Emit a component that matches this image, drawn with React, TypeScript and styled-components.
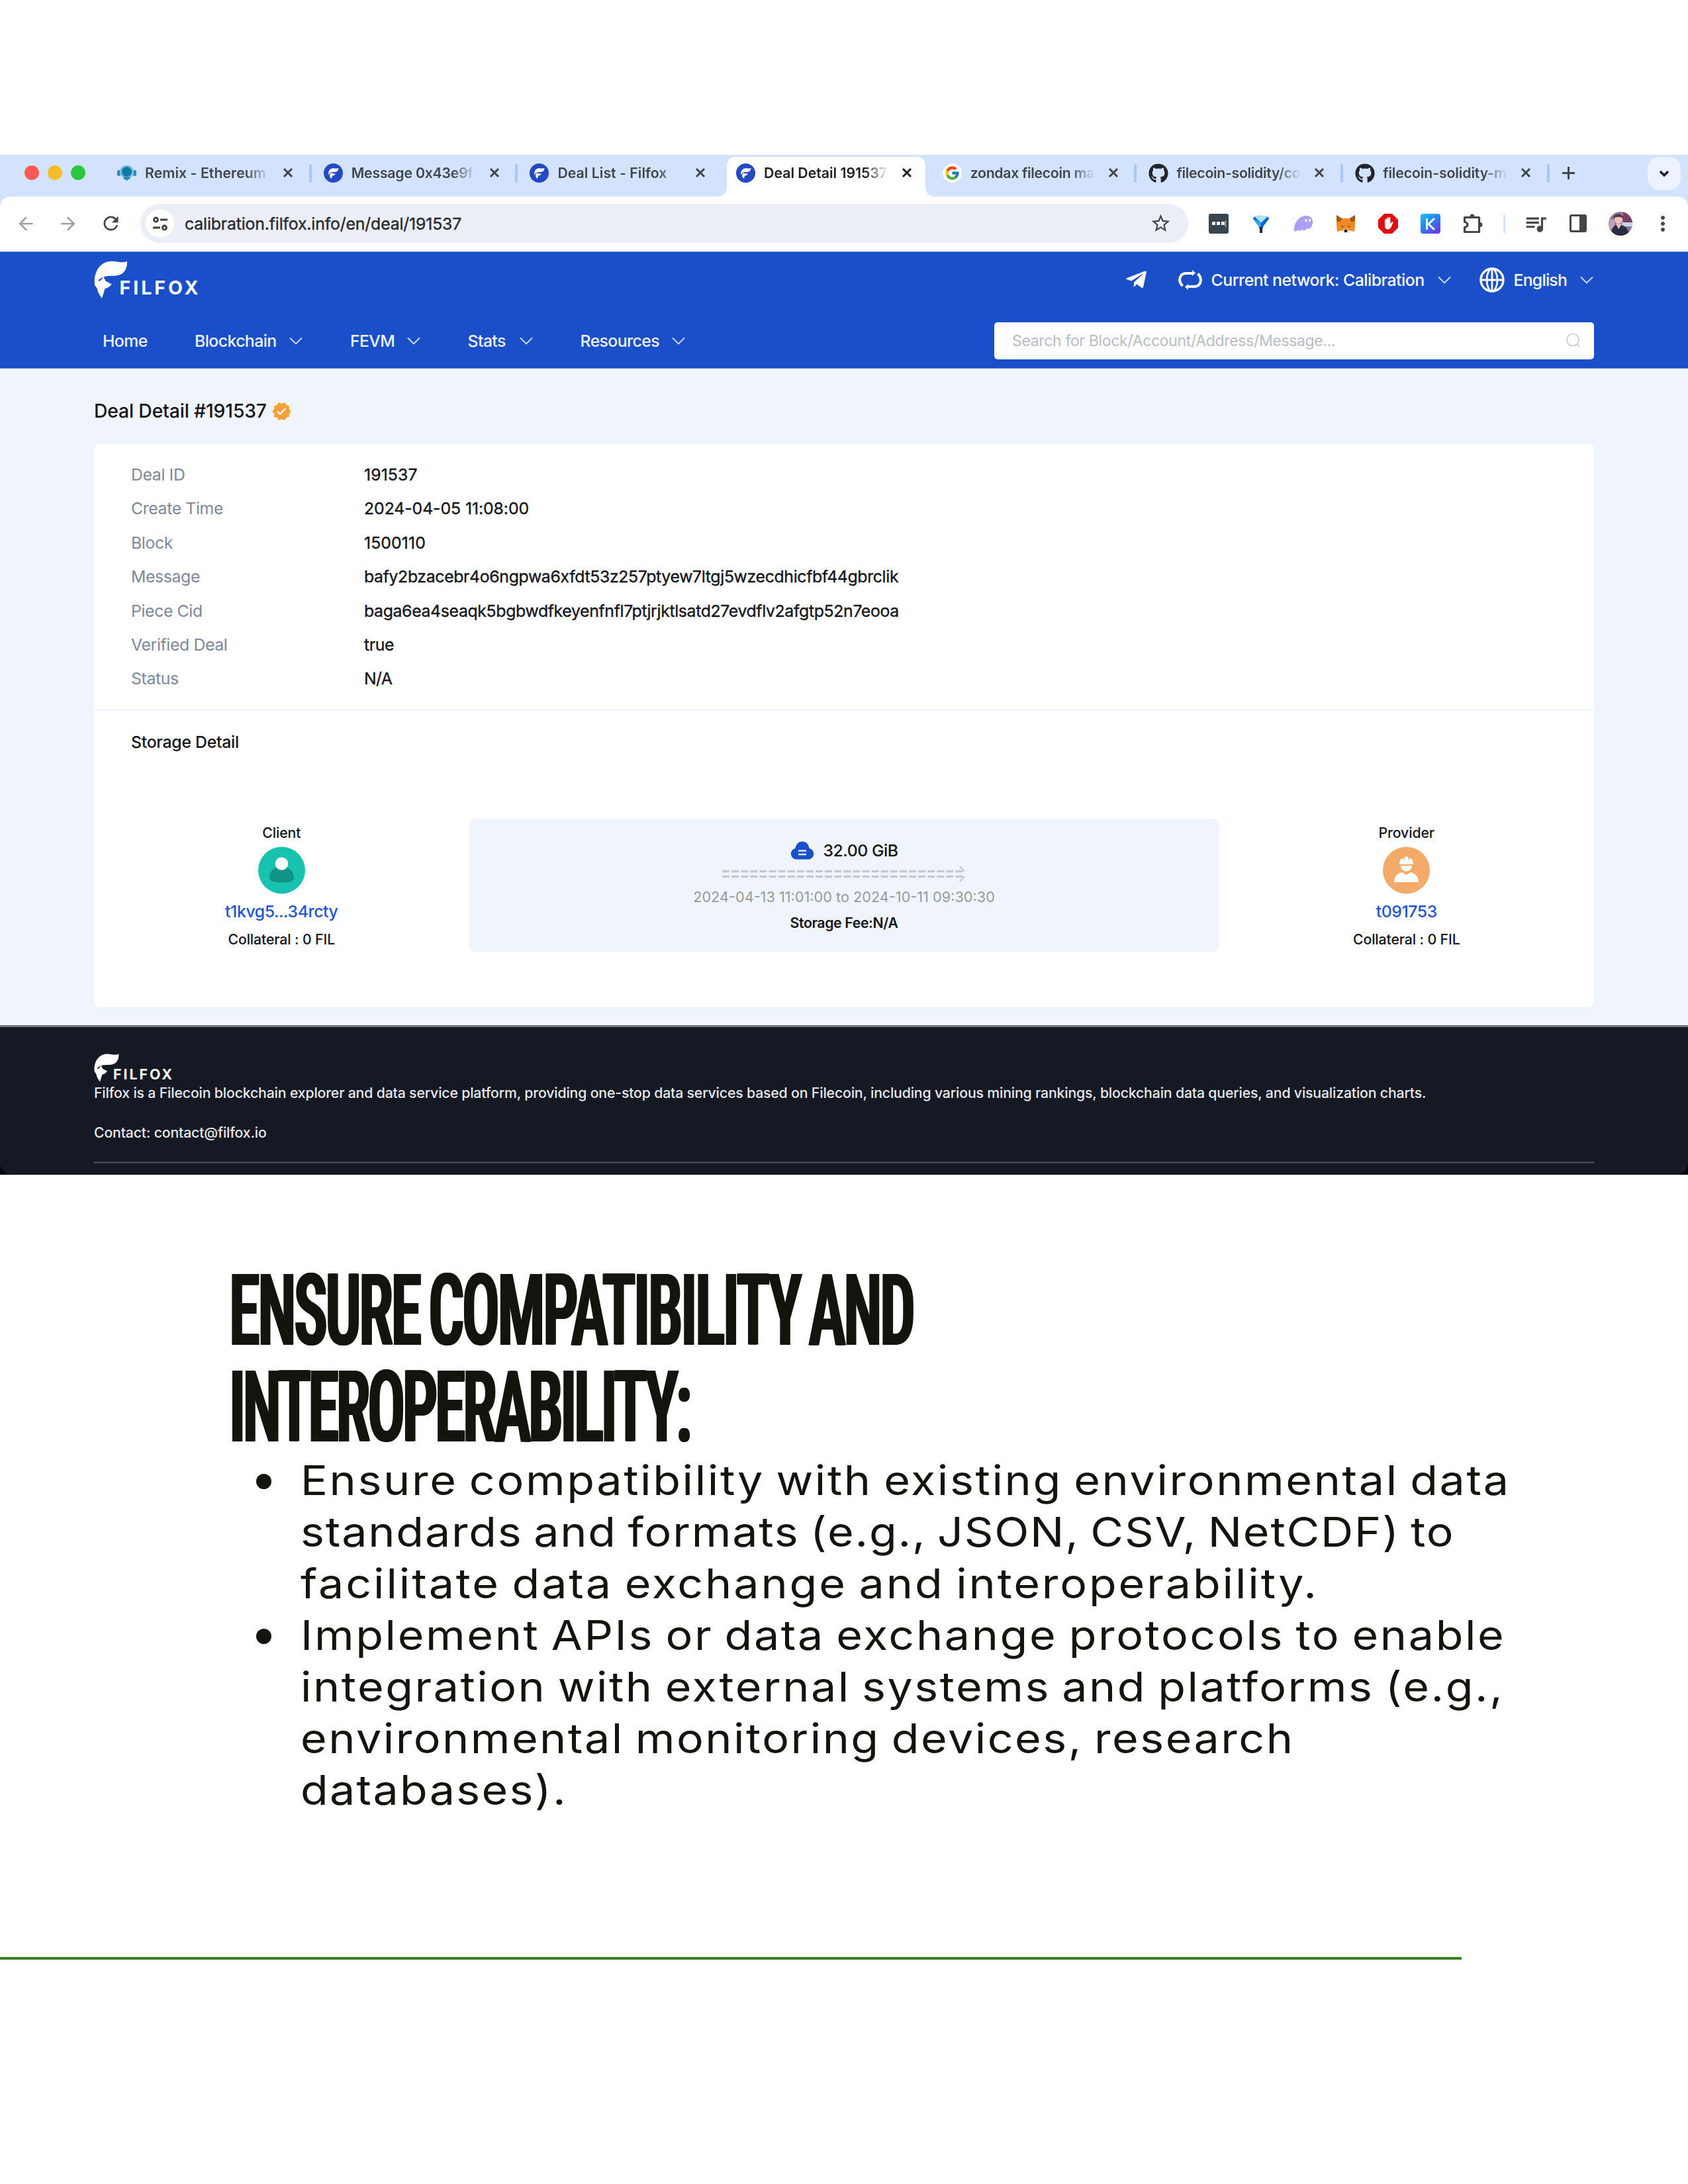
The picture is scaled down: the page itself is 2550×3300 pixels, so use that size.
import React from "react";
import styled, { createGlobalStyle, css } from "styled-components";
import { FaGithub, FaTelegramPlane } from "react-icons/fa";
import { FcGoogle } from "react-icons/fc";
import { MdArrowBack, MdArrowForward, MdMoreVert, MdQueueMusic, MdRefresh, MdStarOutline, MdVerified } from "react-icons/md";

const Global = createGlobalStyle`
  *, *::before, *::after { box-sizing: border-box; }
  body { margin: 0; background: #ffffff; }
  svg { display: block; flex: none; }
`;

const Page = styled.div`
  width: 2550px;
  height: 3300px;
  padding-top: 234px;
  background: #fff;
  font-family: "Inter", "Liberation Sans", sans-serif;
  color: #14140f;
  overflow: hidden;
`;

/* ---------- browser window ---------- */

const Browser = styled.section`
  display: flex;
  flex-direction: column;
  height: 1541px;
  background: #05070f;
`;

const Chrome = styled.div`
  background: #d3e2fd;
`;

const TabStrip = styled.div`
  display: flex;
  height: 63px;
  padding: 0 11px 0 37px;
`;

const Lights = styled.div`
  display: flex;
  gap: 13px;
  width: 120px;
  padding-top: 16px;
`;

const Light = styled.span<{ $color: string }>`
  width: 22px;
  height: 22px;
  border-radius: 50%;
  background: ${(p) => p.$color};
`;

const TabCell = styled.div<{ $active?: boolean; $divider?: boolean }>`
  position: relative;
  display: flex;
  align-items: center;
  width: 311.7px;
  height: 54px;
  padding-left: 20px;
  color: ${(p) => (p.$active ? "#1f2023" : "#42474f")};
  ${(p) =>
    p.$divider &&
    css`
      &::after {
        content: "";
        position: absolute;
        right: -2px;
        top: 14px;
        width: 4px;
        height: 28px;
        border-radius: 2px;
        background: #a9c7fb;
      }
    `}
`;

const ActiveShape = styled.svg`
  position: absolute;
  left: -9px;
  top: 3px;
`;

const Favicon = styled.span`
  position: relative;
  display: flex;
  width: 29px;
  height: 29px;
  margin-right: 13px;
`;

const TabTitle = styled.span<{ $ls: number }>`
  position: relative;
  width: 188px;
  overflow: hidden;
  white-space: nowrap;
  font-size: 21.25px;
  font-weight: 600;
  line-height: 30px;
  letter-spacing: ${(p) => p.$ls}px;
  mask-image: linear-gradient(90deg, #000 152px, transparent 188px);
`;

const TabClose = styled.svg`
  position: relative;
  margin-left: 20px;
`;

const NewTab = styled.div`
  display: flex;
  align-items: center;
  height: 54px;
  padding-left: 21px;
`;

const TabMenu = styled.button`
  display: flex;
  align-items: center;
  justify-content: center;
  width: 50px;
  height: 50px;
  margin: 3px 0 0 auto;
  padding: 0;
  border: 0;
  border-radius: 18px;
  background: #ecf2fe;
`;

const Toolbar = styled.div`
  display: flex;
  align-items: center;
  height: 83px;
  padding: 0 0 2px 7px;
  border-radius: 16px 16px 0 0;
  background: #fff;
`;

const ToolButton = styled.span<{ $muted?: boolean }>`
  display: flex;
  align-items: center;
  justify-content: center;
  width: 64px;
  height: 59px;
  color: ${(p) => (p.$muted ? "#a0a1a4" : "#444649")};
`;

const AddressBar = styled.div`
  display: flex;
  align-items: center;
  width: 1583px;
  height: 59px;
  margin: 0 14px 0 13px;
  padding: 0 25px 0 8px;
  border-radius: 30px;
  background: #ebeef6;
`;

const SiteInfo = styled.span`
  display: flex;
  align-items: center;
  justify-content: center;
  width: 43px;
  height: 43px;
  border-radius: 50%;
  background: #fff;
`;

const Url = styled.span`
  flex: 1;
  margin-left: 16px;
  font-size: 24.8px;
  letter-spacing: -0.15px;
  line-height: 40px;
  color: #2a2b2e;
  -webkit-text-stroke: 0.4px #2a2b2e;
`;

const ToolDivider = styled.span`
  width: 3px;
  height: 28px;
  margin: 0 14px;
  background: #d3e2fd;
`;

/* ---------- site header ---------- */

const SiteHeader = styled.header`
  height: 177px;
  padding: 0 142px;
  border-top: 1px solid #5f83d6;
  border-bottom: 1px solid #5f83d6;
  background: #1b4fc9;
  color: #fff;
`;

const HeaderTop = styled.div`
  display: flex;
  justify-content: space-between;
  height: 83px;
`;

const HeaderTools = styled.div`
  display: flex;
  align-items: center;
  height: 83px;
  padding-right: 1px;
`;

const ToolText = styled.span<{ $ls: number; $left: number; $right: number }>`
  margin-left: ${(p) => p.$left}px;
  margin-right: ${(p) => p.$right}px;
  font-size: 24.8px;
  font-weight: 500;
  line-height: 40px;
  letter-spacing: ${(p) => p.$ls}px;
  white-space: nowrap;
`;

const Spacer = styled.span<{ $w: number }>`
  flex: none;
  width: ${(p) => p.$w}px;
`;

const NavRow = styled.div`
  display: flex;
  align-items: center;
  justify-content: space-between;
  height: 55px;
  margin-top: 23px;
`;

const Nav = styled.nav`
  display: flex;
  align-items: center;
  padding-left: 13px;
`;

const NavItem = styled.span<{ $w: number }>`
  display: flex;
  align-items: center;
  justify-content: space-between;
  width: ${(p) => p.$w}px;
  margin-right: 72px;
  font-size: 24.8px;
  font-weight: 500;
  line-height: 40px;
  letter-spacing: -0.6px;
  color: #eef3fd;
`;

const Search = styled.div`
  display: flex;
  align-items: center;
  justify-content: space-between;
  width: 906px;
  height: 56px;
  padding: 0 20px 0 27px;
  border-radius: 5px;
  background: #fff;
  color: #b9bcc4;
  font-size: 23px;
  letter-spacing: -0.34px;
`;

const LogoBox = styled.div<{ $k: number }>`
  display: flex;
  align-items: flex-start;
  height: ${(p) => 57 * p.$k}px;
`;

const Wordmark = styled.span<{ $k: number }>`
  margin-left: ${(p) => -11.5 * p.$k}px;
  margin-top: ${(p) => 26 * p.$k}px;
  font-size: ${(p) => 28.5 * p.$k}px;
  line-height: ${(p) => 30 * p.$k}px;
  font-weight: 700;
  letter-spacing: ${(p) => 4 * p.$k}px;
`;

const HeaderLogo = styled.div`
  padding-top: 13px;
`;

/* ---------- deal page ---------- */

const Body = styled.main`
  height: 992px;
  padding: 43px 142px 0;
  background: #f0f5fd;
  color: #14151a;
`;

const PageTitle = styled.h1`
  display: flex;
  align-items: center;
  gap: 7px;
  height: 42px;
  margin: 0 0 29px;
  font-size: 28.3px;
  font-weight: 500;
  letter-spacing: -0.14px;
`;

const Card = styled.div`
  height: 851px;
  border-radius: 8px;
  background: #fff;
`;

const Rows = styled.dl`
  margin: 0;
  padding: 20.3px 56px 20px;
  height: 403px;
  border-bottom: 3px solid #f2f5fb;
`;

const Row = styled.div`
  display: grid;
  grid-template-columns: 352px 1fr;
  align-items: center;
  height: 51.4px;
  font-size: 24.8px;
  letter-spacing: -0.38px;
`;

const Label = styled.dt`
  color: #7d889c;
`;

const Value = styled.dd<{ $ls?: number }>`
  margin: 0;
  letter-spacing: ${(p) => p.$ls ?? -0.34}px;
  -webkit-text-stroke: 0.35px #14151a;
`;

const SectionTitle = styled.h2`
  margin: 0;
  padding: 27px 56px 0;
  height: 163px;
  font-size: 24.8px;
  font-weight: 500;
  line-height: 40px;
  letter-spacing: -0.28px;
`;

const Storage = styled.div`
  display: grid;
  grid-template-columns: 1fr 2fr 1fr;
  height: 201px;
`;

const Party = styled.div`
  display: flex;
  flex-direction: column;
  align-items: center;
`;

const Small = styled.span<{ $h: number }>`
  font-size: 21.25px;
  font-weight: 500;
  line-height: ${(p) => p.$h}px;
  letter-spacing: -0.12px;
`;

const PartyLink = styled.a`
  font-size: 24.8px;
  font-weight: 500;
  line-height: 53px;
  letter-spacing: -0.44px;
  color: #2453d3;
`;

const Transfer = styled.div`
  display: flex;
  flex-direction: column;
  align-items: center;
  padding-top: 28px;
  border-radius: 10px;
  background: #f0f5fd;
`;

const Size = styled.div`
  display: flex;
  align-items: center;
  gap: 14px;
  height: 40px;
  margin-bottom: 2px;
  font-size: 24.8px;
  font-weight: 500;
  letter-spacing: -0.49px;
`;

const Period = styled.span`
  margin-top: 4px;
  font-size: 21.7px;
  line-height: 36px;
  color: #96999e;
`;

const Fee = styled.span`
  margin-top: 3px;
  font-size: 21.25px;
  font-weight: 600;
  line-height: 36px;
  letter-spacing: -0.37px;
`;

/* ---------- site footer ---------- */

const SiteFooter = styled.footer`
  flex: 1;
  padding: 40px 142px 0;
  border-top: 3px solid #6f757c;
  border-radius: 0 0 18px 18px;
  background: #151924;
  color: #fff;
`;

const FooterText = styled.p<{ $top: number }>`
  margin: ${(p) => p.$top}px 0 0;
  font-size: 21.25px;
  font-weight: 500;
  line-height: 30px;
  letter-spacing: -0.17px;
  white-space: nowrap;
  color: #e6e8ec;
`;

const FooterRule = styled.div`
  height: 3px;
  margin-top: 29px;
  background: #3e424d;
`;

/* ---------- document text ---------- */

const Article = styled.article`
  padding: 133px 0 0 345px;
`;

const Heading = styled.h2`
  display: flex;
  flex-direction: column;
  margin: 0 0 0 1px;
  height: 289px;
`;

const HeadingLine = styled.span<{ $ls: number }>`
  align-self: flex-start;
  font-family: "Roboto", sans-serif;
  font-stretch: 75%;
  font-weight: 600;
  font-size: 150px;
  line-height: 146px;
  letter-spacing: ${(p) => p.$ls}px;
  word-spacing: -8px;
  white-space: nowrap;
  transform: scaleX(0.634);
  transform-origin: 0 50%;
  text-shadow: 2.4px 0 0 #14140f, -2.4px 0 0 #14140f;
`;

const Bullets = styled.ul`
  margin: 1px 0 0;
  padding: 0;
  list-style: none;
`;

const Bullet = styled.li`
  display: flex;
`;

const Dot = styled.span`
  flex: none;
  width: 23px;
  height: 23px;
  margin: 29px 44px 0 42px;
  border-radius: 50%;
  background: #14140f;
`;

const Lines = styled.div`
  display: flex;
  flex-direction: column;
  align-items: flex-start;
`;

const Line = styled.span<{ $ls: number }>`
  font-size: 62px;
  line-height: 78px;
  letter-spacing: ${(p) => p.$ls}px;
  word-spacing: -4px;
  white-space: nowrap;
  transform: scaleX(1.1);
  transform-origin: 0 50%;
`;

const GreenRule = styled.div`
  width: 2208px;
  height: 4px;
  margin-top: 213px;
  background: #3b7f22;
`;

/* ---------- drawings ---------- */

const FoxMark = ({ k }: { k: number }) => (
  <svg width={50 * k} height={57 * k} viewBox="0 0 150 171" fill="#fff">
    <path d="M4 116C-6 44 34 0 82 2c26 1 46 10 68 0 1 38-16 64-54 66C60 69 24 64 4 116z" />
    <path d="M43 72l10 20 27 14c-8 12-18 18-30 20L36 170C18 146 8 124 18 98l15-12z" />
    <path d="M4 84c-4 14 0 30 12 44 0-12 4-22 12-34z" />
  </svg>
);

const Logo = ({ k }: { k: number }) => (
  <LogoBox $k={k}>
    <FoxMark k={k} />
    <Wordmark $k={k}>FILFOX</Wordmark>
  </LogoBox>
);

const FilfoxIcon = () => (
  <svg width="29" height="29" viewBox="0 0 29 29">
    <circle cx="14.5" cy="14.5" r="14.5" fill="#2449c4" />
    <path d="M7.2 17.5C6.5 9.500 11 7 15 7.300c3 .3 5 .5 7.500-.3-.2 4-2.200 5.800-6 5.900-4 0-7.300.2-9.300 4.600z" fill="#fff" />
    <path d="M11 14.500l7 1.200c-1.500 2.200-3 2.600-4.700 2.700L11.700 23c-3-2.500-3.700-6-.7-8.500z" fill="#fff" />
  </svg>
);

const RemixIcon = () => (
  <svg width="29" height="29" viewBox="0 0 29 29">
    <rect x="0" y="10" width="5" height="9" rx="2.500" fill="#2a8fb5" />
    <rect x="24" y="10" width="5" height="9" rx="2.500" fill="#2a8fb5" />
    <path d="M4 13a10.500 10.500 0 0 1 21 0v4l-6 4.500H10L4 17z" fill="#7db9d8" />
    <circle cx="14.500" cy="12.500" r="7.500" fill="#107ca6" />
    <path d="M9 20.500h11l-1.500 3.500h-2l-2 2.500-2-2.500h-2z" fill="#1b88b0" />
  </svg>
);

const GoogleIcon = () => (
  <svg width="29" height="29" viewBox="0 0 29 29">
    <circle cx="14.500" cy="14.500" r="14.500" fill="#fff" />
    <FcGoogle x="2.500" y="2.500" width="24" height="24" size={24} />
  </svg>
);

const Close = () => (
  <TabClose width="16" height="16" viewBox="0 0 16 16" fill="none" stroke="currentColor" strokeWidth="3">
    <path d="M2 2l12 12M14 2L2 14" />
  </TabClose>
);

const Chevron = () => (
  <svg width="20" height="12" viewBox="0 0 20 12" fill="none" stroke="#d5e0f7" strokeWidth="1.8">
    <path d="M1 1.500l9 9 9-9" />
  </svg>
);

const TuneIcon = () => (
  <svg width="24" height="22" viewBox="0 0 24 22" fill="none" stroke="#3c3e42" strokeWidth="2.800">
    <circle cx="5.500" cy="5" r="3" />
    <path d="M12 5h11M1 17h11" />
    <circle cx="18.500" cy="17" r="3" />
  </svg>
);

const ExtDots = () => (
  <svg width="30" height="30" viewBox="0 0 30 30">
    <rect width="30" height="30" rx="3" fill="#36454f" />
    <path d="M5 12h5v5H5zM12 12h5v5h-5zM19 12h5v5h-5z" fill="#fff" />
    <path d="M25.500 10v10" stroke="#aab4ba" strokeWidth="1.500" />
  </svg>
);

const ExtDiamond = () => (
  <svg width="26" height="28" viewBox="0 0 26 28">
    <path d="M0.500 6C4 .5 22 .5 25.500 6L16 18.500V21h-6v-2.500z" fill="#0e63c4" />
    <path d="M4 4c6-4 14-3 18 0l-9 9z" fill="#a9e3fb" />
    <path d="M0.500 6L13 12v7l-3-.5z" fill="#2ba1ef" />
    <path d="M11 19h4v9h-4z" fill="#17304f" />
  </svg>
);

const ExtPhantom = () => (
  <svg width="30" height="28" viewBox="0 0 30 28">
    <path d="M1 24C1 11 9 2 19 2c7 0 10 4 10 9 0 6-3 11-6 11-2 0-2-2-2-2s-2 4-5 4-2-2-2-2-3 3-5 3-2-2-2-2-5 5-6 1z" fill="#ab9ff2" />
    <ellipse cx="19" cy="9" rx="1.500" ry="2.300" fill="#fff" />
    <ellipse cx="24.500" cy="9" rx="1.500" ry="2.300" fill="#fff" />
  </svg>
);

const ExtFox = () => (
  <svg width="30" height="28" viewBox="0 0 30 28">
    <path d="M1 1l8 5h12l8-5v14l-1 11-8-2-3 3h-4l-3-3-8 2L1 15z" fill="#f08a24" />
    <path d="M1 1l8 5-2 5H2L1 8zM29 1l-8 5 2 5h5l1-3z" fill="#a8541c" />
    <path d="M8 17l4 1-2 1.500zM22 17l-4 1 2 1.500z" fill="#5c3312" />
    <path d="M11 22h8l-1 4h-6z" fill="#d9c6b5" />
    <path d="M13 23h4v4h-4z" fill="#1d1410" />
  </svg>
);

const ExtHand = () => (
  <svg width="30" height="30" viewBox="0 0 30 30">
    <path d="M9 0h12l9 9v12l-9 9H9l-9-9V9z" fill="#e20d13" />
    <path d="M10 18V9.500a1.400 1.400 0 0 1 2.800 0V7a1.400 1.400 0 0 1 2.800 0v-.5a1.400 1.400 0 0 1 2.800 0V15l2-2.500c1.500-1 2.500.2 1.800 1.500-2 5-3.500 9.500-7.500 9.500-3.500 0-4.700-2.500-4.700-5.500z" fill="#fff" />
  </svg>
);

const ExtK = () => (
  <svg width="30" height="30" viewBox="0 0 30 30">
    <defs>
      <linearGradient id="kfill" x1="0" y1="0" x2="0.700" y2="1">
        <stop offset="0" stopColor="#12c9f7" />
        <stop offset="0.550" stopColor="#2b7cf5" />
        <stop offset="1" stopColor="#6a3df0" />
      </linearGradient>
    </defs>
    <rect width="30" height="30" rx="4" fill="url(#kfill)" />
    <path d="M9.500 7v17M21 7l-9 8.500 9 8.500" stroke="#fff" strokeWidth="3" fill="none" />
  </svg>
);

const Puzzle = () => (
  <svg width="30" height="30" viewBox="0 0 30 30" fill="none" stroke="#444649" strokeWidth="3.200" strokeLinejoin="round">
    <path d="M2.500 5.500h22v22h-22v-7c6-1 6-7 0-8z" />
    <path d="M10.500 4a3.500 3.500 0 0 1 7 0zM26 13a3.500 3.500 0 0 1 0 7z" fill="#444649" stroke="none" />
  </svg>
);

const SidePanel = () => (
  <svg width="26" height="27" viewBox="0 0 26 27">
    <rect x="1.500" y="1.500" width="23" height="24" rx="1.500" fill="none" stroke="#444649" strokeWidth="3" />
    <path d="M15 1h9v25h-9z" fill="#444649" />
  </svg>
);

const Avatar = () => (
  <svg width="36" height="36" viewBox="0 0 36 36">
    <clipPath id="face"><circle cx="18" cy="18" r="18" /></clipPath>
    <g clipPath="url(#face)">
      <rect width="36" height="36" fill="#8f7a9c" />
      <path d="M22 0h14v20H22z" fill="#7b3f66" />
      <path d="M20 16h16v6H20z" fill="#c6d5ec" />
      <path d="M0 12h9v14H0z" fill="#b9a3b4" />
      <circle cx="15" cy="12" r="6" fill="#efc3b4" />
      <path d="M7 10c1-9 14-9 16 0-5-3-11-3-16 0z" fill="#5a3446" />
      <path d="M4 36c0-12 5-17 11-17s16 5 16 17z" fill="#2b2d45" />
      <path d="M11 18l4 8 5-7z" fill="#efc3b4" />
    </g>
  </svg>
);

const NetworkIcon = () => (
  <svg width="36" height="30" viewBox="0 0 36 30" fill="none" stroke="#fff" strokeWidth="4">
    <path d="M6.500 24C1 19 1 12 4.500 8c2-2.500 4.500-3 8-3H24" />
    <path d="M29.500 5.500C35 11 35 18 31.500 22c-2 2.500-4.500 3-8 3H13" />
    <path d="M21 0l5 4.500L21 9z M15 21l-5 4.500L15 30z" fill="#fff" stroke="none" />
  </svg>
);

const GlobeIcon = () => (
  <svg width="38" height="38" viewBox="0 0 38 38" fill="none" stroke="#fff" strokeWidth="3.400">
    <circle cx="19" cy="19" r="17" />
    <ellipse cx="19" cy="19" rx="8" ry="17" strokeWidth="2.800" />
    <path d="M19 2v34M2 19h34" strokeWidth="2.800" />
  </svg>
);

const SearchIcon = () => (
  <svg width="23" height="23" viewBox="0 0 23 23" fill="none" stroke="#c4c8cf" strokeWidth="1.700">
    <circle cx="11" cy="10.500" r="9" />
    <path d="M17 17l4 4" />
  </svg>
);

const ClientAvatar = () => (
  <svg width="71" height="72" viewBox="0 0 71 72">
    <circle cx="35.500" cy="36" r="35.500" fill="#17c3af" />
    <path d="M17 47c0-10 7-16 18.500-16S54 37 54 47c0 6-8 7.500-18.500 7.500S17 53 17 47z" fill="#0f9485" />
    <circle cx="35.500" cy="26" r="9.800" fill="#fff" />
  </svg>
);

const ProviderAvatar = () => (
  <svg width="71" height="72" viewBox="0 0 71 72">
    <circle cx="35.500" cy="36" r="35.500" fill="#f4aa69" />
    <path d="M25 27c0-6 2.500-8.500 6-9.500l1 5 1-7h5l1 7 1-5c3.500 1 6 3.500 6 9.500z" fill="#fff" />
    <path d="M27 29h17c0 4-3 8.500-8.500 8.500S27 33 27 29z" fill="#fff" />
    <path d="M17 54c0-9 5-13.500 12-15l6.500 4 6.500-4c7 1.500 12 6 12 15z" fill="#fff" />
  </svg>
);

const CloudIcon = () => (
  <svg width="36" height="28" viewBox="0 0 36 28">
    <path d="M9 27.500a8.500 8.500 0 0 1-1.500-16.800C8.500 4.500 12.500.5 18 .5s9.500 4 10.500 10.200A8.500 8.500 0 0 1 27 27.500z" fill="#1b4fc9" />
    <path d="M12 14.500h12M12 20h12" stroke="#dfe9fb" strokeWidth="2.600" />
  </svg>
);

const ArrowTrack = () => (
  <svg width="368" height="26" viewBox="0 0 368 26" fill="none" stroke="#c6c9ce" strokeWidth="3.400">
    <path d="M0 9.500h366M0 17.500h366" strokeDasharray="11 3.100" />
    <path d="M359 2l7 8M359 25l7-8" strokeWidth="2.400" />
  </svg>
);

/* ---------- content ---------- */

type TabData = { title: string; icon: React.ReactNode; ls: number; active?: boolean; divider?: boolean };

const tabs: TabData[] = [
  { title: "Remix - Ethereum", icon: <RemixIcon />, ls: 0.05, divider: true },
  { title: "Message 0x43e9f", icon: <FilfoxIcon />, ls: -0.21, divider: true },
  { title: "Deal List - Filfox", icon: <FilfoxIcon />, ls: 0.03 },
  { title: "Deal Detail 191537", icon: <FilfoxIcon />, ls: 0, active: true },
  { title: "zondax filecoin ma", icon: <GoogleIcon />, ls: -0.32, divider: true },
  { title: "filecoin-solidity/co", icon: <FaGithub size={30} color="#20242b" />, ls: -0.3, divider: true },
  { title: "filecoin-solidity-m", icon: <FaGithub size={30} color="#20242b" />, ls: -0.11, divider: true },
];

const nav: [string, number, boolean][] = [
  ["Home", 67, false],
  ["Blockchain", 163, true],
  ["FEVM", 105.5, true],
  ["Stats", 98, true],
  ["Resources", 158, true],
];

const details: [string, string, number][] = [
  ["Deal ID", "191537", 0.1],
  ["Create Time", "2024-04-05 11:08:00", -0.07],
  ["Block", "1500110", 0.1],
  ["Message", "bafy2bzacebr4o6ngpwa6xfdt53z257ptyew7ltgj5wzecdhicfbf44gbrclik", -0.34],
  ["Piece Cid", "baga6ea4seaqk5bgbwdfkeyenfnfl7ptjrjktlsatd27evdflv2afgtp52n7eooa", -0.34],
  ["Verified Deal", "true", -0.34],
  ["Status", "N/A", -0.6],
];

const bullets: [string, number][][] = [
  [
    ["Ensure compatibility with existing environmental data", 2.36],
    ["standards and formats (e.g., JSON, CSV, NetCDF) to", 1.62],
    ["facilitate data exchange and interoperability.", 2.6],
  ],
  [
    ["Implement APIs or data exchange protocols to enable", 2.35],
    ["integration with external systems and platforms (e.g.,", 2.26],
    ["environmental monitoring devices, research", 2.22],
    ["databases).", 2.05],
  ],
];

export default function App() {
  return (
    <Page>
      <Global />
      <Browser>
        <Chrome>
          <TabStrip>
            <Lights>
              <Light $color="#fe5a54" />
              <Light $color="#fdbb2a" />
              <Light $color="#2ac640" />
            </Lights>
            {tabs.map((t) => (
              <TabCell key={t.title} $active={t.active} $divider={t.divider}>
                {t.active && (
                  <ActiveShape width="330" height="60" viewBox="0 0 330 60">
                    <path d="M0 60C10 60 15 54 15 44V14C15 5 20 0 29 0H301C310 0 315 5 315 14V44C315 54 320 60 330 60z" fill="#fff" />
                  </ActiveShape>
                )}
                <Favicon>{t.icon}</Favicon>
                <TabTitle $ls={t.ls}>{t.title}</TabTitle>
                <Close />
              </TabCell>
            ))}
            <NewTab>
              <svg width="19" height="19" viewBox="0 0 19 19" stroke="#42474f" strokeWidth="3">
                <path d="M9.500 0v19M0 9.500h19" />
              </svg>
            </NewTab>
            <TabMenu>
              <svg width="14" height="10" viewBox="0 0 14 10" fill="none" stroke="#1f2023" strokeWidth="3.400">
                <path d="M1 2l6 6 6-6" />
              </svg>
            </TabMenu>
          </TabStrip>
          <Toolbar>
            <ToolButton $muted><MdArrowBack size={32} /></ToolButton>
            <ToolButton $muted><MdArrowForward size={32} /></ToolButton>
            <ToolButton><MdRefresh size={33} /></ToolButton>
            <AddressBar>
              <SiteInfo><TuneIcon /></SiteInfo>
              <Url>calibration.filfox.info/en/deal/191537</Url>
              <MdStarOutline size={33} color="#444649" />
            </AddressBar>
            <ToolButton><ExtDots /></ToolButton>
            <ToolButton><ExtDiamond /></ToolButton>
            <ToolButton><ExtPhantom /></ToolButton>
            <ToolButton><ExtFox /></ToolButton>
            <ToolButton><ExtHand /></ToolButton>
            <ToolButton><ExtK /></ToolButton>
            <ToolButton><Puzzle /></ToolButton>
            <ToolDivider />
            <ToolButton><MdQueueMusic size={38} /></ToolButton>
            <ToolButton><SidePanel /></ToolButton>
            <ToolButton><Avatar /></ToolButton>
            <ToolButton><MdMoreVert size={36} /></ToolButton>
          </Toolbar>
        </Chrome>

        <SiteHeader>
          <HeaderTop>
            <HeaderLogo><Logo k={1} /></HeaderLogo>
            <HeaderTools>
              <FaTelegramPlane size={35} />
              <Spacer $w={46} />
              <NetworkIcon />
              <ToolText $ls={-0.51} $left={14} $right={20}>Current network: Calibration</ToolText>
              <Chevron />
              <Spacer $w={43} />
              <GlobeIcon />
              <ToolText $ls={-0.8} $left={14} $right={20}>English</ToolText>
              <Chevron />
            </HeaderTools>
          </HeaderTop>
          <NavRow>
            <Nav>
              {nav.map(([name, w, menu]) => (
                <NavItem key={name} $w={w}>
                  {name}
                  {menu && <Chevron />}
                </NavItem>
              ))}
            </Nav>
            <Search>
              Search for Block/Account/Address/Message...
              <SearchIcon />
            </Search>
          </NavRow>
        </SiteHeader>

        <Body>
          <PageTitle>
            Deal Detail #191537
            <MdVerified size={31} color="#f7a134" />
          </PageTitle>
          <Card>
            <Rows>
              {details.map(([label, value, ls]) => (
                <Row key={label}>
                  <Label>{label}</Label>
                  <Value $ls={ls}>{value}</Value>
                </Row>
              ))}
            </Rows>
            <SectionTitle>Storage Detail</SectionTitle>
            <Storage>
              <Party>
                <Small $h={42}>Client</Small>
                <ClientAvatar />
                <PartyLink>t1kvg5...34rcty</PartyLink>
                <Small $h={30}>Collateral : 0 FIL</Small>
              </Party>
              <Transfer>
                <Size>
                  <CloudIcon />
                  32.00 GiB
                </Size>
                <ArrowTrack />
                <Period>2024-04-13 11:01:00 to 2024-10-11 09:30:30</Period>
                <Fee>Storage Fee:N/A</Fee>
              </Transfer>
              <Party>
                <Small $h={42}>Provider</Small>
                <ProviderAvatar />
                <PartyLink>t091753</PartyLink>
                <Small $h={30}>Collateral : 0 FIL</Small>
              </Party>
            </Storage>
          </Card>
        </Body>

        <SiteFooter>
          <Logo k={0.75} />
          <FooterText $top={1}>
            Filfox is a Filecoin blockchain explorer and data service platform, providing one-stop data services based on Filecoin, including various mining rankings, blockchain data queries, and visualization charts.
          </FooterText>
          <FooterText $top={30}>Contact: contact@filfox.io</FooterText>
          <FooterRule />
        </SiteFooter>
      </Browser>

      <Article>
        <Heading>
          <HeadingLine $ls={-5.6}>ENSURE COMPATIBILITY AND</HeadingLine>
          <HeadingLine $ls={-7.4}>INTEROPERABILITY:</HeadingLine>
        </Heading>
        <Bullets>
          {bullets.map((lines, i) => (
            <Bullet key={i}>
              <Dot />
              <Lines>
                {lines.map(([text, ls]) => (
                  <Line key={text} $ls={ls}>{text}</Line>
                ))}
              </Lines>
            </Bullet>
          ))}
        </Bullets>
      </Article>
      <GreenRule />
    </Page>
  );
}
